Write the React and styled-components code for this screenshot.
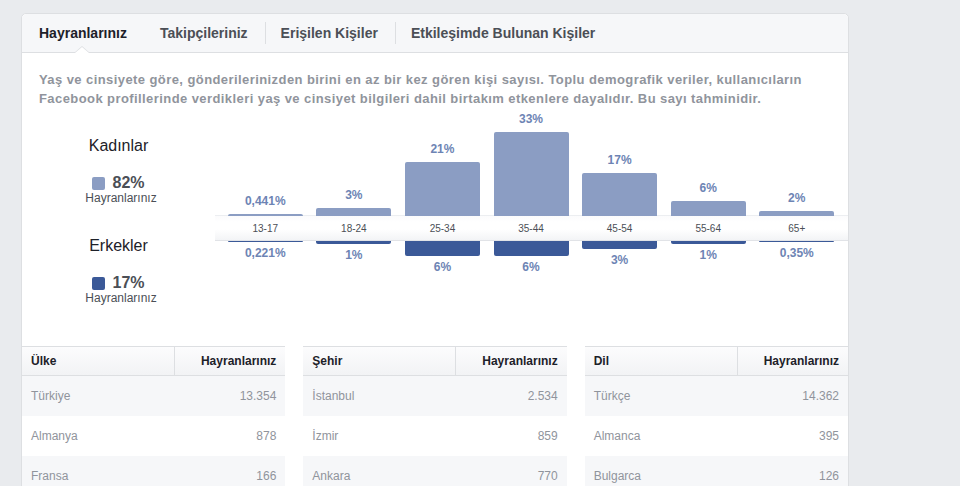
import React from 'react'
import styled, { createGlobalStyle } from 'styled-components'

const GlobalStyle = createGlobalStyle`
  html, body {
    margin: 0;
    padding: 0;
    background: #e9ebee;
    font-family: "Liberation Sans", Helvetica, Arial, sans-serif;
    -webkit-font-smoothing: antialiased;
  }
`;

const PX_PER_PERCENT = 2.55;

const ages = [
  { label: '13-17', women: 0.8, men: 0.5, wText: '0,441%', mText: '0,221%' },
  { label: '18-24', women: 3, men: 1, wText: '3%', mText: '1%' },
  { label: '25-34', women: 21, men: 6, wText: '21%', mText: '6%' },
  { label: '35-44', women: 33, men: 6, wText: '33%', mText: '6%' },
  { label: '45-54', women: 17, men: 3, wText: '17%', mText: '3%' },
  { label: '55-64', women: 6, men: 1, wText: '6%', mText: '1%' },
  { label: '65+', women: 2, men: 0.5, wText: '2%', mText: '0,35%' },
];

const tables = [
  { title: 'Ülke', rows: [['Türkiye', '13.354'], ['Almanya', '878'], ['Fransa', '166']] },
  { title: 'Şehir', rows: [['İstanbul', '2.534'], ['İzmir', '859'], ['Ankara', '770']] },
  { title: 'Dil', rows: [['Türkçe', '14.362'], ['Almanca', '395'], ['Bulgarca', '126']] },
];

const Card = styled.div`
  margin: 13px 0 0 21px;
  width: 828px;
  box-sizing: border-box;
  min-height: 520px;
  background: #fff;
  border: 1px solid #dddfe2;
  border-radius: 5px 5px 0 0;
`;

const Tabs = styled.div`
  display: flex;
  align-items: center;
  height: 38px;
  background: #f6f7f9;
  border-bottom: 1px solid #dddfe2;
  border-radius: 5px 5px 0 0;
`;

const Tab = styled.div`
  position: relative;
  height: 38px;
  display: flex;
  align-items: center;
  padding: 0 17px 0 16px;
  font-size: 14px;
  font-weight: bold;
  color: ${p => (p.$active ? '#1d2129' : '#4b4f56')};

  &:first-child {
    padding-left: 17px;
  }

  & + &::before {
    content: '';
    position: absolute;
    left: 0;
    top: 8px;
    height: 22px;
    border-left: 1px solid #dddfe2;
  }
`;

/* little pointer under the selected tab */
const Notch = styled.span`
  position: absolute;
  left: 50%;
  bottom: -1px;
  margin-left: -9px;
  width: 0;
  height: 0;
  border-style: solid;
  border-width: 0 8px 7px;
  border-color: transparent transparent #dddfe2;

  &::after {
    content: '';
    position: absolute;
    left: -7px;
    top: 1px;
    border-style: solid;
    border-width: 0 7px 6px;
    border-color: transparent transparent #fff;
  }
`;

const Desc = styled.p`
  margin: 0;
  padding: 17px 17px 0;
  font-size: 13px;
  letter-spacing: 0.42px;
  line-height: 19px;
  font-weight: bold;
  color: #90949c;
`;

const ChartSection = styled.div`
  display: flex;
  height: 195px;
`;

const Legend = styled.div`
  width: 193px;
  padding-top: 28px;
  text-align: center;
`;

const LegendGroup = styled.div`
  & + & {
    margin-top: 31px;
  }
`;

const LegendTitle = styled.div`
  font-size: 16px;
  line-height: 20px;
  color: #1d2129;
`;

const LegendStat = styled.div`
  margin-top: 19px;
  display: flex;
  justify-content: center;
  align-items: center;
  gap: 7px;
  font-size: 16px;
  line-height: 16px;
  font-weight: bold;
  color: #4b4f56;
`;

const Swatch = styled.span`
  width: 13px;
  height: 13px;
  border-radius: 2px;
  background: ${p => p.$color};
`;

const LegendSub = styled.div`
  font-size: 12px;
  line-height: 14px;
  color: #4b4f56;
  padding-left: 5px;
`;

const Chart = styled.div`
  width: 633px;
`;

const BarRow = styled.div`
  display: flex;
  padding: 0 7px 0 6px;
  height: ${p => (p.$top ? '108px' : '40px')};
  align-items: ${p => (p.$top ? 'flex-end' : 'flex-start')};
`;

const Col = styled.div`
  flex: 1;
  display: flex;
  flex-direction: column;
  align-items: center;
`;

const Bar = styled.div`
  width: 75px;
  background: ${p => (p.$men ? '#3b5998' : '#8b9dc3')};
  border-radius: ${p => (p.$men ? '0 0 2px 2px' : '2px 2px 0 0')};
`;

const Value = styled.div`
  font-size: 12px;
  line-height: 15px;
  font-weight: bold;
  color: #6d84b4;
  margin: ${p => (p.$men ? '4px 0 0' : '0 0 5px')};
`;

const Band = styled.div`
  display: flex;
  align-items: center;
  box-sizing: border-box;
  height: 26px;
  margin-top: -1px;
  padding: 0 7px 0 6px;
  border-top: 1px solid #eceef1;
  border-bottom: 1px solid #e1e3e7;
  background: linear-gradient(#fbfbfc 0%, #fff 25%, #fff 55%, #f3f4f6 100%);
`;

const AgeLabel = styled.div`
  flex: 1;
  text-align: center;
  font-size: 10px;
  color: #4b4f56;
`;

const TableGrid = styled.div`
  margin-top: 43px;
  display: grid;
  grid-template-columns: repeat(3, 1fr);
  gap: 18px;
`;

const Table = styled.div`
  font-size: 12px;
`;

const HeadRow = styled.div`
  display: grid;
  grid-template-columns: 153px 1fr;
  height: 28px;
  border-top: 1px solid #dddfe2;
  border-bottom: 1px solid #dddfe2;
  background: linear-gradient(#fcfcfd, #f2f3f5);
  font-weight: bold;
  color: #1d2129;
`;

const HeadCell = styled.div`
  display: flex;
  align-items: center;
  padding: 0 9px;
  justify-content: ${p => (p.$right ? 'flex-end' : 'flex-start')};
  border-right: ${p => (p.$right ? 'none' : '1px solid #dddfe2')};
`;

const Row = styled.div`
  display: flex;
  align-items: center;
  justify-content: space-between;
  height: 40px;
  padding: 0 9px;
  color: #90949c;
  background: ${p => (p.$shaded ? '#f6f7f9' : '#fff')};
`;

const App = () => (
  <>
    <GlobalStyle />
    <Card>
      <Tabs>
        <Tab $active>Hayranlarınız<Notch /></Tab>
        <Tab>Takipçileriniz</Tab>
        <Tab>Erişilen Kişiler</Tab>
        <Tab>Etkileşimde Bulunan Kişiler</Tab>
      </Tabs>
      <Desc>
        Yaş ve cinsiyete göre, gönderilerinizden birini en az bir kez gören kişi sayısı. Toplu demografik veriler, kullanıcıların Facebook profillerinde verdikleri yaş ve cinsiyet bilgileri dahil birtakım etkenlere dayalıdır. Bu sayı tahminidir.
      </Desc>
      <ChartSection>
        <Legend>
          <LegendGroup>
            <LegendTitle>Kadınlar</LegendTitle>
            <LegendStat><Swatch $color='#8b9dc3' />82%</LegendStat>
            <LegendSub>Hayranlarınız</LegendSub>
          </LegendGroup>
          <LegendGroup>
            <LegendTitle>Erkekler</LegendTitle>
            <LegendStat><Swatch $color='#3b5998' />17%</LegendStat>
            <LegendSub>Hayranlarınız</LegendSub>
          </LegendGroup>
        </Legend>
        <Chart>
          <BarRow $top>
            {ages.map(a => (
              <Col key={a.label}>
                <Value>{a.wText}</Value>
                <Bar style={{ height: a.women * PX_PER_PERCENT }} />
              </Col>
            ))}
          </BarRow>
          <Band>
            {ages.map(a => <AgeLabel key={a.label}>{a.label}</AgeLabel>)}
          </Band>
          <BarRow>
            {ages.map(a => (
              <Col key={a.label}>
                <Bar $men style={{ height: a.men * PX_PER_PERCENT }} />
                <Value $men>{a.mText}</Value>
              </Col>
            ))}
          </BarRow>
        </Chart>
      </ChartSection>
      <TableGrid>
        {tables.map(t => (
          <Table key={t.title}>
            <HeadRow>
              <HeadCell>{t.title}</HeadCell>
              <HeadCell $right>Hayranlarınız</HeadCell>
            </HeadRow>
            {t.rows.map(([name, count], i) => (
              <Row key={name} $shaded={i % 2 === 0}>
                <span>{name}</span>
                <span>{count}</span>
              </Row>
            ))}
          </Table>
        ))}
      </TableGrid>
    </Card>
  </>
);

export default App;
